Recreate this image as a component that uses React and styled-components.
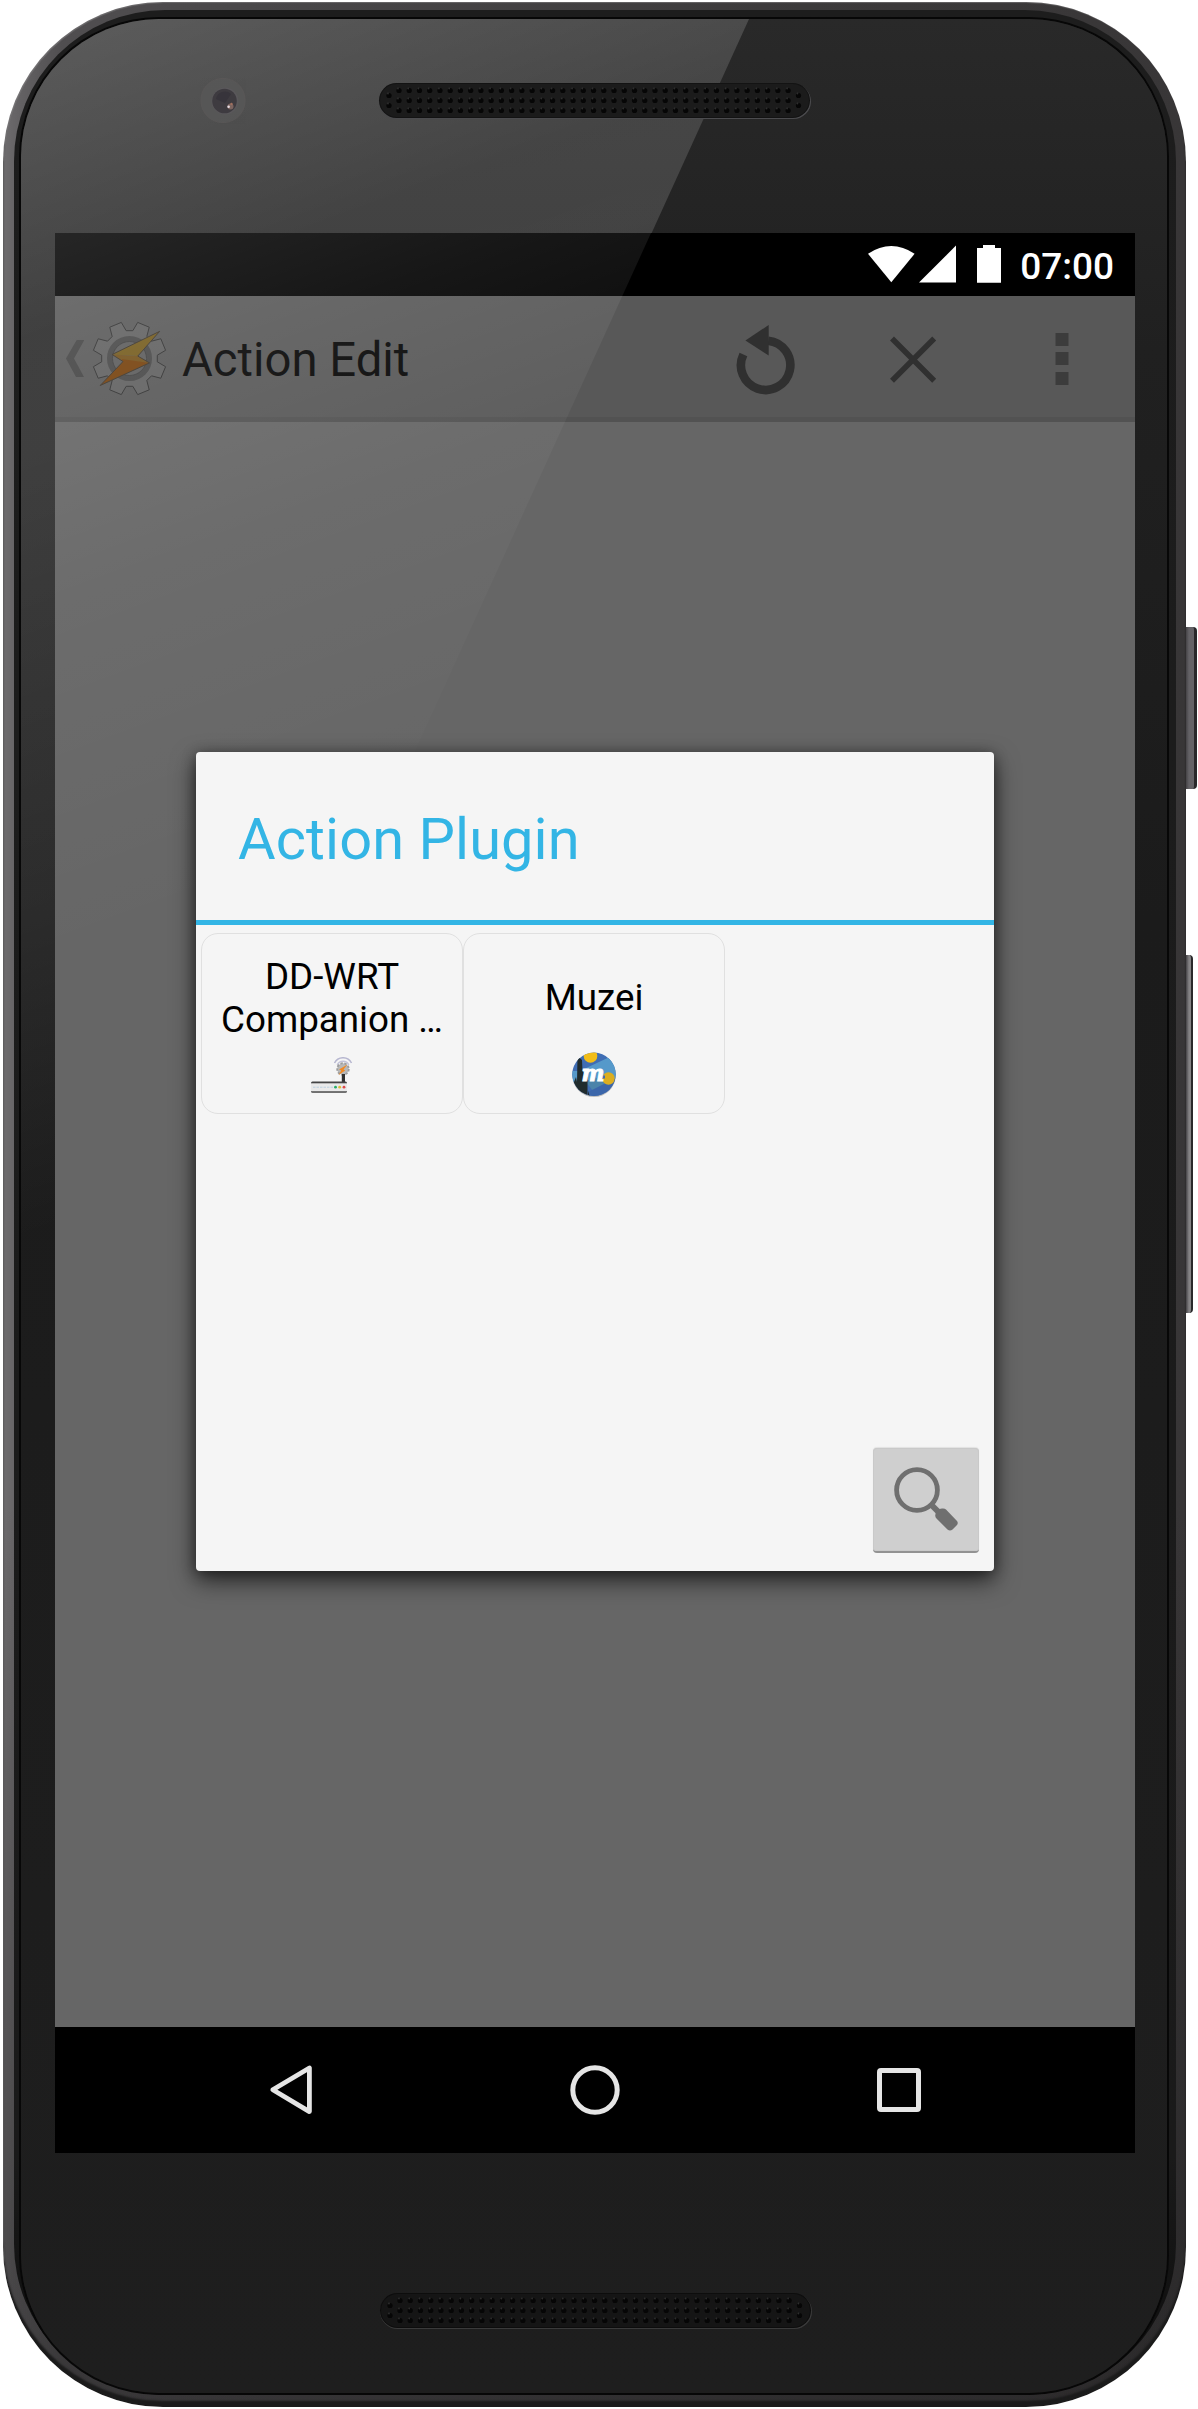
import React from "react";
import styled, { createGlobalStyle } from "styled-components";

const GlobalStyle = createGlobalStyle`
  *, *::before, *::after { box-sizing: border-box; }
  body { margin: 0; background: #fff; }
  svg { display: block; flex: none; }
  button { border: 0; padding: 0; margin: 0; background: none; font: inherit; color: inherit; }
`;

const Page = styled.main`
  display: flex;
  width: 1198px;
  height: 2409px;
  padding: 2px 0 2px 3px;
  font-family: Roboto, "Liberation Sans", sans-serif;
  overflow: hidden;
`;

/* ---------- device shell ---------- */

const Rim = styled.div`
  flex: none;
  width: 1183px;
  height: 2405px;
  padding: 8px 10px 12px 11px;
  border-radius: 160px;
  background:
    linear-gradient(to bottom, rgba(30, 29, 30, 0) 1500px, rgba(30, 29, 30, 0.45) 2300px),
    linear-gradient(to right, #6e6c6e 0, #656365 14px, #504e50 60px, #494749 260px, #3c3a3b 800px, #383637 100%);
  box-shadow: inset 0 -6px 2px #1b1b1b, inset 1px 1px 1px rgba(130, 128, 130, 0.6);
`;

const Band = styled.div`
  height: 100%;
  padding: 9px 9px 2px 7px;
  border-radius: 151px;
  background: linear-gradient(to bottom, #1d1d1d, #1a1a1a 90%, #0c0c0c);
`;

const Glass = styled.div`
  position: relative;
  display: flex;
  flex-direction: column;
  height: 100%;
  border-radius: 138px;
  overflow: hidden;
  background: linear-gradient(to bottom, #292929, #202020 330px, #1b1b1b 900px, #1e1e1e);
  box-shadow: 0 0 0 2px #070707;

  &::before {
    content: "";
    position: absolute;
    inset: 0;
    background: linear-gradient(
      160deg,
      rgba(255, 255, 255, 0.245) 0,
      rgba(255, 255, 255, 0.14) 300px,
      rgba(255, 255, 255, 0.145) 400px,
      rgba(255, 255, 255, 0.11) 600px,
      rgba(255, 255, 255, 0.07) 850px,
      rgba(255, 255, 255, 0) 1150px
    );
    clip-path: polygon(0 0, 728px 0, 0 1600px);
  }
`;

const TopBezel = styled.div`
  position: relative;
  display: flex;
  align-items: center;
  gap: 132px;
  flex: none;
  height: 214px;
  padding: 59px 0 109px 179px;
`;

const BottomBezel = styled.div`
  display: flex;
  flex: 1;
  padding: 139px 0 0 358px;
`;

const SideKeys = styled.div`
  display: flex;
  flex-direction: column;
  align-items: flex-start;
  gap: 166px;
  padding-top: 625px;
`;

const SideKey = styled.div`
  width: ${(p) => p.$width}px;
  height: ${(p) => p.$height}px;
  border-radius: 0 4px 4px 0;
  border-right: ${(p) => p.$edge}px solid #29282a;
  background: linear-gradient(to right, #454346, ${(p) => p.$tone} 3px, ${(p) => p.$tone});
`;

/* ---------- screen ---------- */

const Screen = styled.div`
  position: relative;
  display: flex;
  flex-direction: column;
  flex: none;
  width: 1080px;
  height: 1920px;
  margin-left: 34px;
  background: #666;
`;

const ScreenGlare = styled.div`
  position: absolute;
  inset: 0;
  pointer-events: none;
  clip-path: polygon(0 0, 596px 0, 0 1308px);
  background: linear-gradient(
    160deg,
    rgba(255, 255, 255, 0.15) 0,
    rgba(255, 255, 255, 0.09) 165px,
    rgba(255, 255, 255, 0.038) 350px,
    rgba(255, 255, 255, 0) 690px
  );
`;

const StatusBar = styled.div`
  display: flex;
  justify-content: flex-end;
  flex: none;
  height: 63px;
  padding: 12px 21px 0 0;
  background: #000;
  color: #fff;
`;

const Clock = styled.span`
  margin-left: 19px;
  font-size: 37px;
  line-height: 43px;
  font-weight: 500;
`;

const BatteryIcon = styled.svg`
  margin-left: 21px;
`;

const SignalIcon = styled.svg`
  margin-left: 4px;
`;

const ActionBar = styled.header`
  display: flex;
  align-items: center;
  flex: none;
  height: 126px;
  padding: 4px 0 0 11px;
  border-bottom: 5px solid #525252;
  background: #585858;
`;

const ScreenTitle = styled.h1`
  flex: 1;
  margin: 2px 0 0 15px;
  font-size: 47.25px;
  font-weight: 400;
  line-height: 56px;
  color: #060606;
`;

const GearLogo = styled.svg`
  margin-left: 8px;
`;

const BarAction = styled.button`
  display: flex;
  align-items: center;
  justify-content: center;
  width: 147px;
  height: 117px;
`;

const Content = styled.div`
  flex: 1;
`;

const NavBar = styled.nav`
  display: flex;
  align-items: center;
  justify-content: center;
  flex: none;
  height: 126px;
  background: #000;
`;

const NavKey = styled.button`
  display: flex;
  align-items: center;
  justify-content: center;
  width: 304px;
  height: 126px;
`;

/* ---------- dialog ---------- */

const DialogLayer = styled.div`
  position: absolute;
  inset: 0;
  display: flex;
  justify-content: center;
  align-items: flex-start;
  padding-top: 519px;
`;

const Dialog = styled.section`
  display: flex;
  flex-direction: column;
  width: 798px;
  height: 819px;
  border-radius: 4px;
  background: #f5f5f5;
  box-shadow: 0 10px 24px rgba(0, 0, 0, 0.6), 0 2px 14px rgba(0, 0, 0, 0.4);
`;

const DialogTitle = styled.h2`
  height: 173px;
  margin: 0;
  padding: 53px 42px 0;
  border-bottom: 5px solid #33b5e5;
  font-size: 57.75px;
  font-weight: 400;
  line-height: 68px;
  letter-spacing: 0.08px;
  color: #33b5e5;
`;

const PluginGrid = styled.div`
  display: flex;
  flex: 1;
  align-items: flex-start;
  padding: 8px 0 0 5px;
`;

const PluginCard = styled.div`
  display: flex;
  flex-direction: column;
  align-items: center;
  width: 262px;
  height: 181px;
  padding-top: 21px;
  border: 1px solid #e0e0e0;
  border-radius: 17px;
`;

const PluginName = styled.div`
  display: flex;
  flex-direction: column;
  justify-content: center;
  height: 85px;
  font-size: 36.75px;
  line-height: 43px;
  text-align: center;
  color: #000;
`;

const PluginIcon = styled.div`
  display: flex;
  align-items: center;
  height: 46px;
  margin-top: 12px;
`;

const DialogFooter = styled.footer`
  display: flex;
  justify-content: flex-end;
  padding: 0 15px 18px;
`;

const SearchButton = styled.button`
  display: flex;
  align-items: center;
  justify-content: center;
  width: 106px;
  height: 105px;
  border-radius: 4px;
  border-bottom: 2px solid #929292;
  background: #cfcfcf;
  box-shadow: inset 0 0 0 1px #c9c9c9, 0 -1px 1px #e2e2e2;
`;

/* ---------- drawings ---------- */

const grilleColumns = Array.from({ length: 39 }, (_, i) => 21 + i * 10.24);

function Grille({ body, top, lip }) {
  const hole = (x, y) => (
    <g key={`${x}-${y}`}>
      <circle cx={x} cy={y} r="2.6" fill="#060606" />
      <circle cx={x - 1} cy={y - 2} r="0.9" fill="#4a4a4a" opacity=".55" />
    </g>
  );
  return (
    <svg width="434" height="38" viewBox="0 0 434 38">
      <rect x="1" y="2" width="432" height="35" rx="17.5" fill={lip} />
      <rect x="1" y="1" width="431" height="35" rx="17.5" fill={top} />
      <rect x="2" y="2" width="429" height="33" rx="16.5" fill={body} />
      {grilleColumns.map((x) => [8.5, 18.5, 28.5].map((y) => hole(x, y)))}
      {[11, 420.5].map((x) => [13.5, 23.5].map((y) => hole(x, y)))}
    </svg>
  );
}

function Camera() {
  return (
    <svg width="46" height="46" viewBox="0 0 46 46">
      <circle cx="23" cy="22.5" r="22" fill="#595959" stroke="#5c5959" strokeWidth="1.2" opacity=".75" />
      <circle cx="25" cy="23" r="13.5" fill="#5a585b" />
      <circle cx="24.5" cy="23" r="12.3" fill="#3e3b40" />
      <path d="M16 21a9 9 0 0 1 15-5l-6 9z" fill="#37343b" />
      <circle cx="30.5" cy="28.5" r="3" fill="#7d6560" />
      <circle cx="28.6" cy="28.8" r="1.3" fill="#e9dfe6" />
      <circle cx="31.5" cy="26" r="1.2" fill="#a06f5e" />
    </svg>
  );
}

const polar = (r, deg) => {
  const a = (deg * Math.PI) / 180;
  return `${(37.5 + r * Math.sin(a)).toFixed(2)},${(37.5 - r * Math.cos(a)).toFixed(2)}`;
};

const gearPoints = Array.from({ length: 8 }, (_, i) => {
  const a = 22.5 + i * 45;
  return [polar(28, a - 15.7), polar(37, a - 9.7), polar(37, a + 9.7), polar(28, a + 15.7)].join(" ");
}).join(" ");

function Gear() {
  return (
    <GearLogo width="75" height="75" viewBox="0 0 75 75">
      <polygon points={gearPoints} fill="#606060" stroke="#303030" strokeWidth="1" strokeLinejoin="round" />
      <circle cx="37.5" cy="37.5" r="19.8" fill="none" stroke="#474747" strokeWidth="5.4" />
      <circle cx="37.5" cy="37.5" r="17" fill="#5b5b5b" stroke="#3a3a3a" strokeWidth=".9" />
      <path d="M67.7 10.3 45.8 35.1 20.1 33.5z" fill="#745b1c" />
      <path d="M20.1 33.5 45.8 35.1 57.5 41.9 31 40.5z" fill="#73511a" />
      <path d="M29.5 38 57.5 41.9 8.2 64.5 31 40.5z" fill="#75400b" />
      <path d="M67.7 10.3 45.8 35.1 57.5 41.9 8.2 64.5 31 40.5 20.1 33.5z" fill="none" stroke="#3b342b" strokeWidth="1" strokeLinejoin="round" />
    </GearLogo>
  );
}

function Router() {
  return (
    <svg width="42" height="36" viewBox="0 0 42 36">
      <path d="M22 6a9.5 9.5 0 0 1 17 0" transform="translate(1.5 0)" fill="none" stroke="#b7b7d0" strokeWidth="1.5" />
      <path d="M26 7.5a6.4 6.4 0 0 1 11.5 0" transform="translate(.3 .3)" fill="none" stroke="#c3c3d8" strokeWidth="1.5" />
      <circle cx="32" cy="12" r="5.8" fill="#b8b8b8" stroke="#9c9c9c" strokeWidth="1.8" strokeDasharray="2.4 1.6" />
      <path d="M36.5 7.500 32.500 12.500 34.200 13.500 27.500 18 30.300 13.500 28 12.500z" fill="#f18a25" />
      <rect x="30.8" y="17" width="3.2" height="9" fill="#303030" />
      <rect x="0" y="24.500" width="36" height="11.2" rx="1.5" fill="#444" />
      <rect x="0" y="26.3" width="36" height="8" fill="#e9e9e9" />
      <path d="M2 30.2h20" stroke="#bcd0df" strokeWidth="1" strokeDasharray="2.5 1" />
      <circle cx="24.5" cy="30.2" r="1.4" fill="#26ad69" />
      <circle cx="28.7" cy="30.2" r="1.4" fill="#ddc034" />
      <circle cx="33" cy="30.2" r="1.4" fill="#dd4949" />
    </svg>
  );
}

function Muzei() {
  return (
    <svg width="44" height="46" viewBox="0 0 44 46">
      <defs>
        <clipPath id="muzei-disc">
          <circle cx="22" cy="22.3" r="21.7" />
        </clipPath>
      </defs>
      <circle cx="22" cy="23.4" r="21.7" fill="#bdbdbd" />
      <g clipPath="url(#muzei-disc)">
        <rect width="44" height="46" fill="#3f6db4" />
        <path d="M10 18 44 2v24L26 32 10 26z" fill="#5599ca" />
        <path d="M0 19h10v12H0z" fill="#5599ca" />
        <path d="M14 30 30 24l7 5-16 10z" fill="#4b84aa" />
        <path d="M16 40 44 26v20H16z" fill="#3b66aa" />
        <circle cx="18.5" cy="4" r="6.8" fill="#f1bd19" />
        <circle cx="36.5" cy="26.5" r="6.2" fill="#dcae20" />
        <path d="M5.5 4 10 8l.5 11 5 6v21H3l-1-16 2-5 1 5z" fill="#202b2d" />
        <path d="M16 38.5 18 45h-2z" fill="#202b2d" />
        <rect x="30" y="23.5" width="3" height="3" fill="#3f6db4" />
      </g>
      <text x="9.5" y="29" fontFamily="'DejaVu Serif', 'Liberation Serif', serif" fontWeight="700" fontStyle="italic" fontSize="23" fill="#fff" stroke="#fff" strokeWidth="1" textLength="23" lengthAdjust="spacingAndGlyphs">
        m
      </text>
    </svg>
  );
}

const plugins = [
  { name: ["DD-WRT", "Companion …"], icon: <Router /> },
  { name: ["Muzei"], icon: <Muzei /> },
];

export default function App() {
  return (
    <Page>
      <GlobalStyle />
      <Rim>
        <Band>
          <Glass>
            <TopBezel>
              <Camera />
              <Grille body="#1b1b1b" top="#131313" lip="#4b4b4e" />
            </TopBezel>
            <Screen>
              <StatusBar>
                <svg width="47" height="38" viewBox="0 0 47 38">
                  <path d="M0 8.8Q23.3-6.6 46.6 8.8L23.3 37.2z" fill="#fff" />
                </svg>
                <SignalIcon width="37" height="38" viewBox="0 0 37 38">
                  <path d="M0 37.6 37 .6v37z" fill="#fff" />
                </SignalIcon>
                <BatteryIcon width="24" height="38" viewBox="0 0 24 38">
                  <path d="M0 3h6V0h12v3h6v34.7H0z" fill="#fff" />
                </BatteryIcon>
                <Clock>07:00</Clock>
              </StatusBar>
              <ActionBar>
                <svg width="18" height="37" viewBox="0 0 18 37">
                  <path d="M10.7 0h7.6L8 18.5 18 37h-8L0 18.5z" fill="#434343" />
                </svg>
                <Gear />
                <ScreenTitle>Action Edit</ScreenTitle>
                <BarAction aria-label="Revert">
                  <svg width="64" height="74" viewBox="0 0 64 74">
                    <g transform="translate(-.8 -2)">
                      <path d="M8.2 34.5A24.7 24.7 0 1 0 33 20.7" fill="none" stroke="#303030" strokeWidth="8.6" />
                      <path d="M10.2 20.4 33.5 5v30.6z" fill="#303030" />
                    </g>
                  </svg>
                </BarAction>
                <BarAction aria-label="Cancel">
                  <svg width="54" height="54" viewBox="0 0 54 54">
                    <path d="M4 6.600 46.200 48.800M46.200 6.600 4 48.800" stroke="#303030" strokeWidth="5.6" />
                  </svg>
                </BarAction>
                <BarAction aria-label="More options">
                  <svg width="14" height="52" viewBox="0 0 14 52">
                    <path d="M.5 0h13v13H.5zM.5 19h13v13H.5zM.5 39h13v13H.5z" fill="#3c3c3c" />
                  </svg>
                </BarAction>
              </ActionBar>
              <Content />
              <NavBar>
                <NavKey aria-label="Back">
                  <svg width="44" height="52" viewBox="0 0 44 52">
                    <path d="M40.4 4v43.6L3.8 25.8z" fill="none" stroke="#e5e5e5" strokeWidth="4.8" strokeLinejoin="round" />
                  </svg>
                </NavKey>
                <NavKey aria-label="Home">
                  <svg width="50" height="50" viewBox="0 0 50 50">
                    <circle cx="25" cy="25" r="22.2" fill="none" stroke="#e5e5e5" strokeWidth="5" />
                  </svg>
                </NavKey>
                <NavKey aria-label="Overview">
                  <svg width="44" height="44" viewBox="0 0 44 44">
                    <rect x="2.5" y="2.5" width="39" height="39" rx="1.5" fill="none" stroke="#e5e5e5" strokeWidth="5" />
                  </svg>
                </NavKey>
              </NavBar>
              <ScreenGlare />
              <DialogLayer>
                <Dialog role="dialog">
                  <DialogTitle>Action Plugin</DialogTitle>
                  <PluginGrid>
                    {plugins.map((plugin) => (
                      <PluginCard key={plugin.name[0]}>
                        <PluginName>
                          {plugin.name.map((line) => (
                            <span key={line}>{line}</span>
                          ))}
                        </PluginName>
                        <PluginIcon>{plugin.icon}</PluginIcon>
                      </PluginCard>
                    ))}
                  </PluginGrid>
                  <DialogFooter>
                    <SearchButton aria-label="Search">
                      <svg width="68" height="66" viewBox="0 0 68 66">
                        <circle cx="25" cy="23" r="20.4" fill="none" stroke="#6f6f6f" strokeWidth="4.8" />
                        <path d="m38.5 37 8 8" stroke="#6f6f6f" strokeWidth="6" />
                        <path d="M44.5 42.5 50 41.5Q52.5 41 54 42.5L65 54Q66.5 56 65 58L60.5 62.5Q58 64.5 55.5 62.5L44.5 51.5Q43 50 43.3 48z" fill="#6f6f6f" />
                      </svg>
                    </SearchButton>
                  </DialogFooter>
                </Dialog>
              </DialogLayer>
            </Screen>
            <BottomBezel>
              <Grille body="#151515" top="#0d0d0d" lip="#3a3a3a" />
            </BottomBezel>
          </Glass>
        </Band>
      </Rim>
      <SideKeys>
        <SideKey $width={11} $height={162} $edge={3} $tone="#646266" />
        <SideKey $width={7} $height={358} $edge={2} $tone="#858385" />
      </SideKeys>
    </Page>
  );
}
